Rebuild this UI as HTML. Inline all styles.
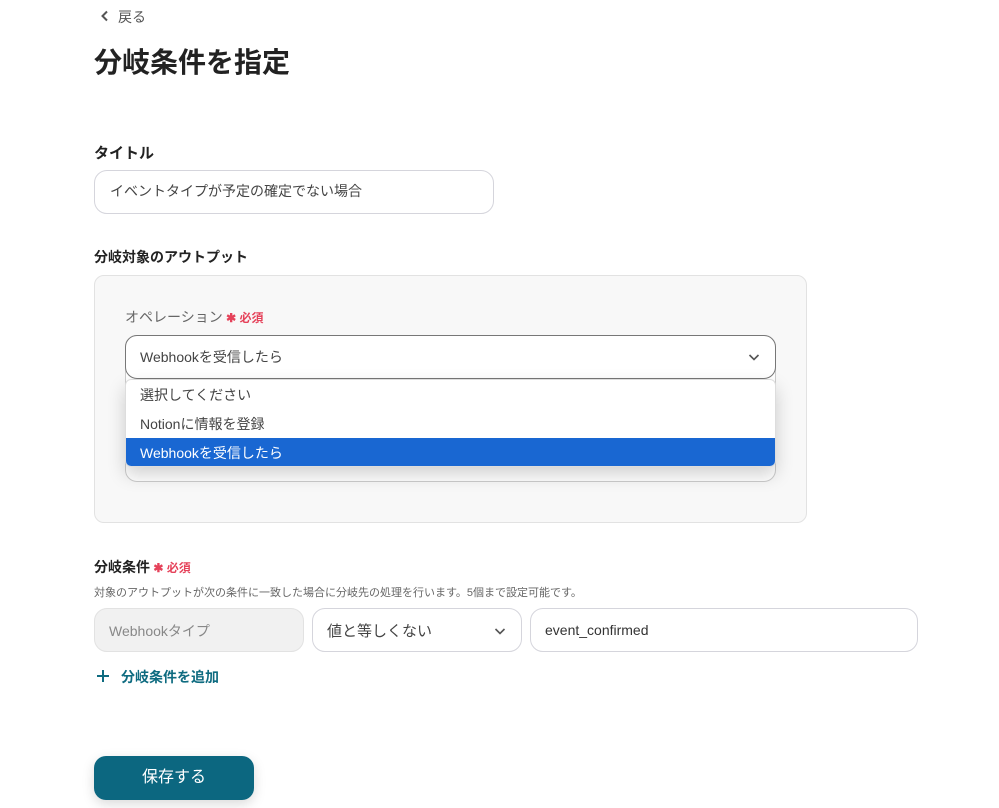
<!DOCTYPE html>
<html><head><meta charset="utf-8"><style>
*{box-sizing:border-box;margin:0;padding:0}
body{width:999px;height:808px;background:#fff;font-family:"Liberation Sans","Noto Sans CJK JP",sans-serif;color:#222;position:relative;overflow:hidden}
.a{position:absolute;white-space:nowrap}
.req{color:#e5425a;font-size:12px;font-weight:bold}
.box{position:absolute;border:1px solid #d5d5dc;border-radius:13px;background:#fff}
</style></head><body>
<svg class="a" style="left:100px;top:10px" width="10" height="12" viewBox="0 0 10 12"><path d="M7 1.5L2.5 6L7 10.5" fill="none" stroke="#555" stroke-width="2"/></svg>
<div class="a" style="left:118px;top:7px;font-size:14px;color:#555">戻る</div>
<div class="a" style="left:94px;top:41px;font-size:28px;font-weight:bold;color:#222">分岐条件を指定</div>
<div class="a" style="left:94px;top:142px;font-size:15px;font-weight:bold">タイトル</div>
<div class="box" style="left:94px;top:170px;width:400px;height:44px"></div>
<div class="a" style="left:110px;top:181px;font-size:14px;color:#444">イベントタイプが予定の確定でない場合</div>
<div class="a" style="left:94px;top:247px;font-size:14px;font-weight:bold">分岐対象のアウトプット</div>
<div class="a" style="left:94px;top:275px;width:713px;height:248px;background:#f8f8f8;border:1px solid #e2e2e2;border-radius:10px"></div>
<div class="a" style="left:125px;top:307px;font-size:14px;color:#666">オペレーション<span class="req"> ✱ 必須</span></div>
<div class="a" style="left:125px;top:335px;width:651px;height:147px;border:1px solid #ccc;border-radius:12px;background:#fff"></div>
<div class="a" style="left:125px;top:335px;width:651px;height:44px;border:1px solid #777;border-radius:12px;background:#fff"></div>
<div class="a" style="left:140px;top:347px;font-size:14px;color:#444">Webhookを受信したら</div>
<svg class="a" style="left:748px;top:352px" width="12" height="10" viewBox="0 0 12 10"><path d="M1.5 3L6 7.5L10.5 3" fill="none" stroke="#555" stroke-width="1.6"/></svg>
<div class="a" style="left:125px;top:379px;width:651px;height:88px;background:#fff;border:1px solid #ddd;border-radius:6px;box-shadow:0 8px 18px rgba(0,0,0,.18);overflow:hidden">
<div style="height:29px;padding:5px 0 0 14px;font-size:14px;color:#444">選択してください</div>
<div style="height:29px;padding:5px 0 0 14px;font-size:14px;color:#444">Notionに情報を登録</div>
<div style="height:30px;padding:5px 0 0 14px;font-size:14px;color:#fff;background:#1967d2">Webhookを受信したら</div>
</div>
<div class="a" style="left:94px;top:557px;font-size:14px;font-weight:bold">分岐条件<span class="req"> ✱ 必須</span></div>
<div class="a" style="left:94px;top:584px;font-size:11px;color:#666">対象のアウトプットが次の条件に一致した場合に分岐先の処理を行います。5個まで設定可能です。</div>
<div class="box" style="left:94px;top:608px;width:210px;height:44px;background:#f1f1f1;border-color:#e2e2e2"></div>
<div class="a" style="left:109px;top:621px;font-size:14px;color:#888">Webhookタイプ</div>
<div class="box" style="left:312px;top:608px;width:210px;height:44px"></div>
<div class="a" style="left:327px;top:620px;font-size:15px;color:#444">値と等しくない</div>
<svg class="a" style="left:494px;top:626px" width="12" height="10" viewBox="0 0 12 10"><path d="M1.5 3L6 7.5L10.5 3" fill="none" stroke="#555" stroke-width="1.6"/></svg>
<div class="box" style="left:530px;top:608px;width:388px;height:44px"></div>
<div class="a" style="left:545px;top:622px;font-size:14px;color:#333">event_confirmed</div>
<svg class="a" style="left:96px;top:669px" width="14" height="14" viewBox="0 0 14 14"><path d="M7 1V13M1 7H13" stroke="#0e6b80" stroke-width="2"/></svg>
<div class="a" style="left:121px;top:667px;font-size:14px;font-weight:bold;color:#0e6b80">分岐条件を追加</div>
<div class="a" style="left:94px;top:756px;width:160px;height:44px;background:#0c6780;border-radius:12px;color:#fff;font-size:16px;text-align:center;line-height:44px;box-shadow:0 4px 12px rgba(0,0,0,.15)">保存する</div>
</body></html>
